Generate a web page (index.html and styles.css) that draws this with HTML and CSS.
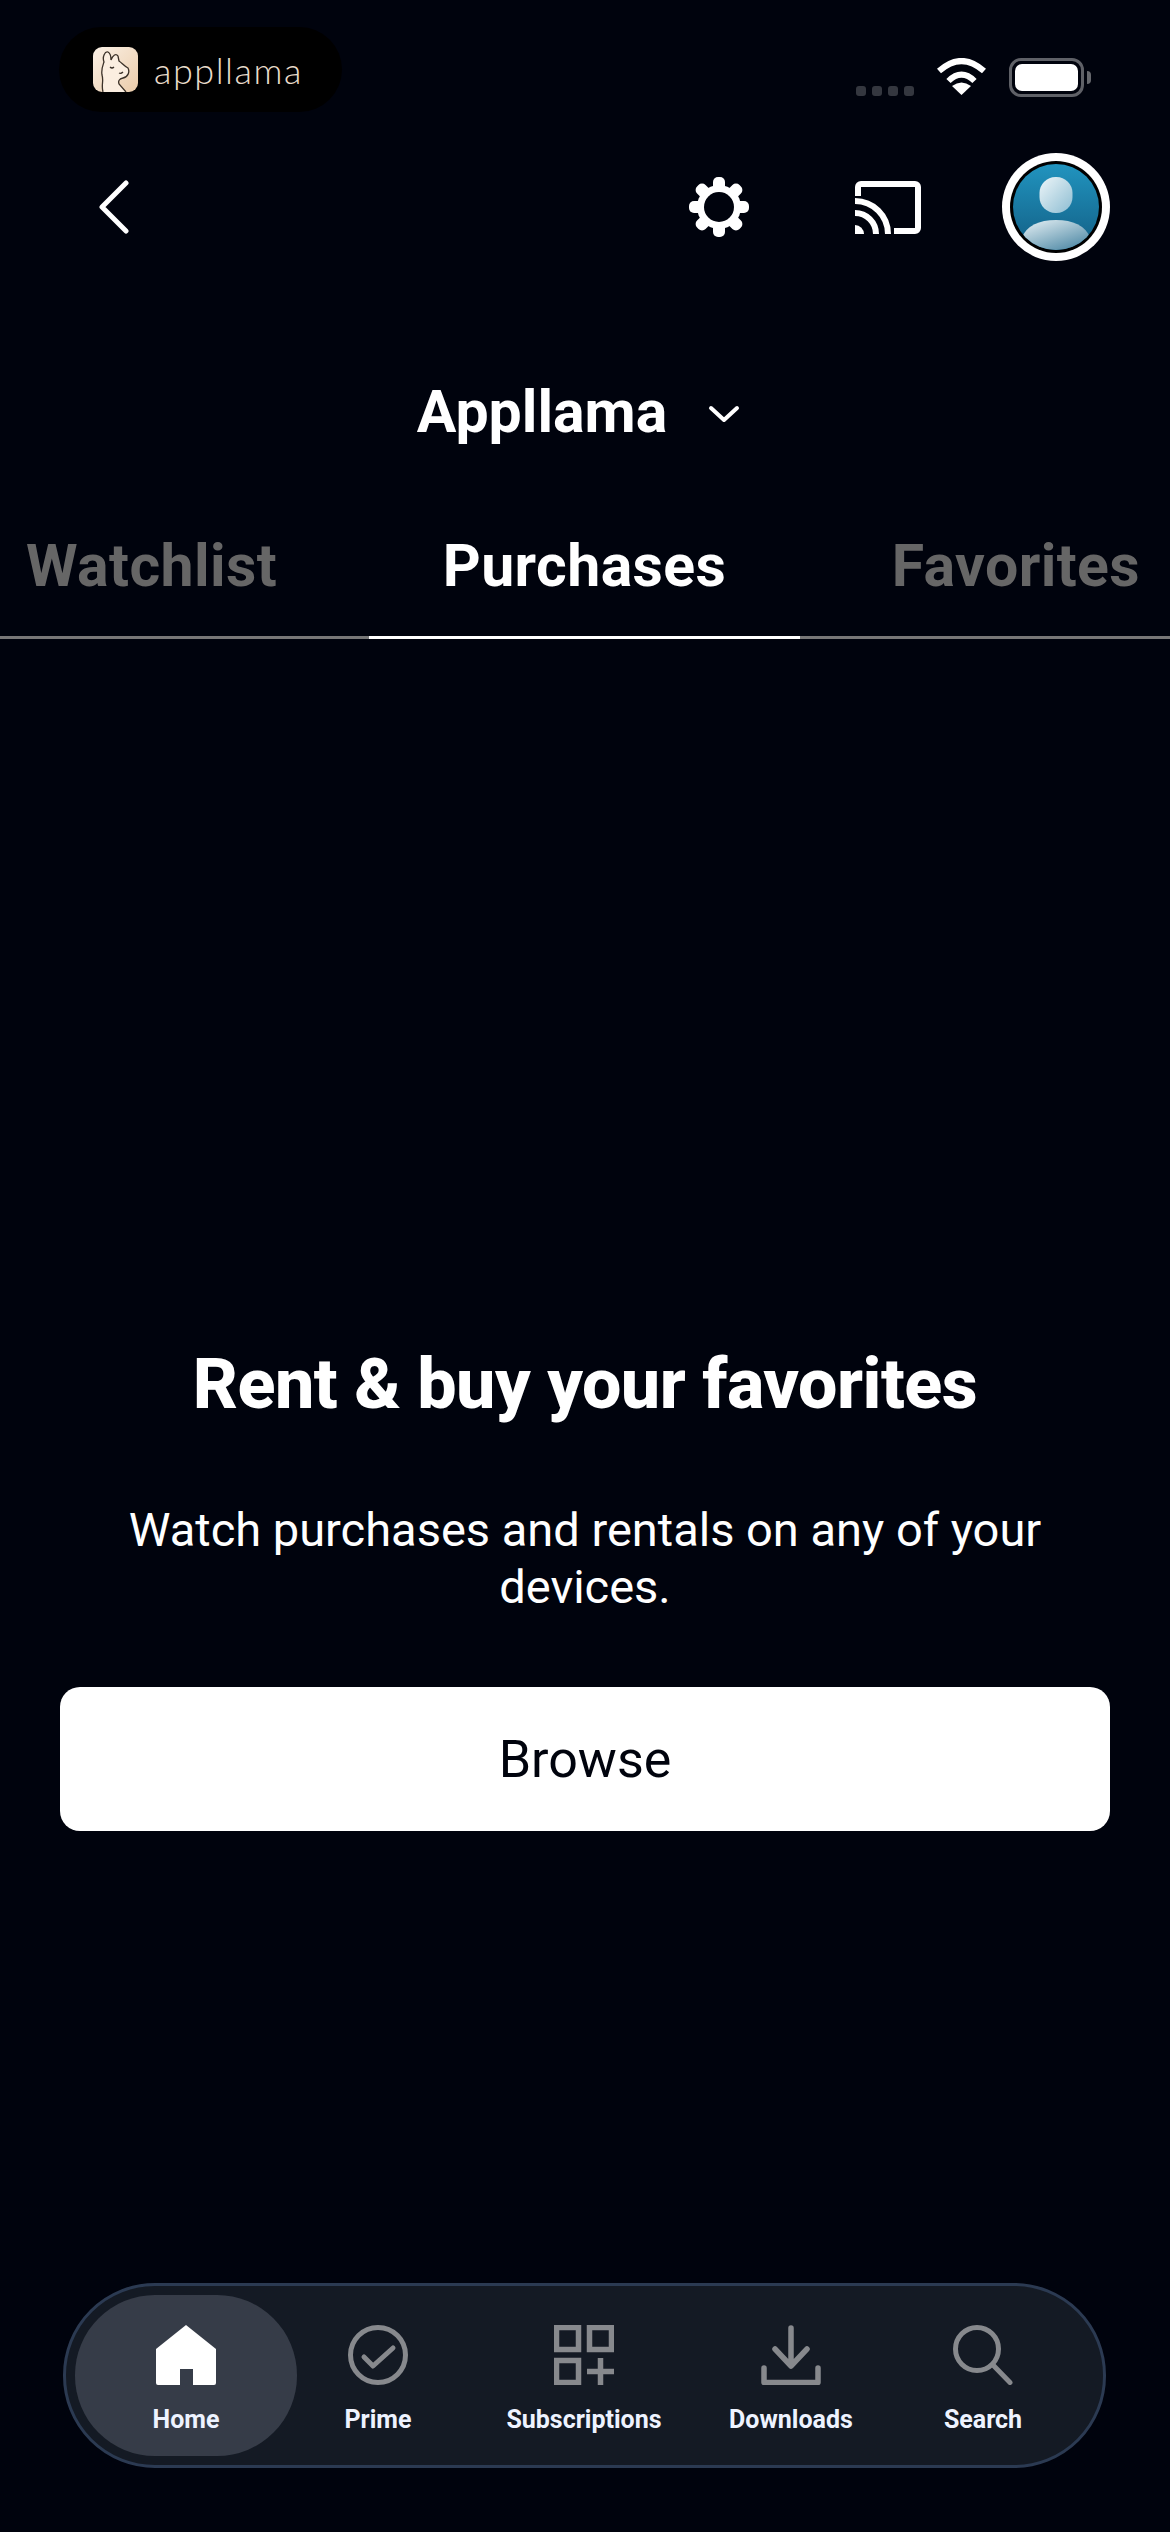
FILE: index.html
```html
<!DOCTYPE html>
<html>
<head>
    <title>Purchases</title>
    <link rel="stylesheet" href="styles.css">
</head>
<body>
    <div class="statusbar">
        <div class="brand">
            <svg class="brand-icon" viewBox="0 0 45 45">
                <defs>
                    <linearGradient id="brandBg" x1="0" y1="0" x2="1" y2="1">
                        <stop offset="0" stop-color="#fbf1e6"/>
                        <stop offset="1" stop-color="#eacba9"/>
                    </linearGradient>
                </defs>
                <rect width="45" height="45" rx="9" fill="url(#brandBg)"/>
                <path d="M10 45C8 38 11 34 9 28C8 22 10 18 11 15C9 10 12 4 15 5C17 6 18 10 18 13C20 8 23 6 25 9L26 14C29 16 31 19 35 21C37 25 35 30 30 31C26 32 25 34 26 37L33 45" fill="#fbeee0" stroke="#3b3128" stroke-width="1.300"/>
                <path d="M17 20q2 2 4 0M30 25q-2 2-4 1" fill="none" stroke="#3b3128" stroke-width="1.200"/>
            </svg>
            <span class="brand-name">appllama</span>
        </div>
        <div class="status-icons">
            <div class="signal"><i></i><i></i><i></i><i></i></div>
            <svg class="wifi" viewBox="0 0 51 37">
                <path d="M3 13Q25.500 -7 48 13M12.500 23Q25.500 10 38.500 23" fill="none" stroke="#fff" stroke-width="6"/>
                <path d="M25.500 37L16 28Q25.500 21 35 28Z" fill="#fff"/>
            </svg>
            <div class="battery"><div class="battery-level"></div></div>
            <div class="battery-tip"></div>
        </div>
    </div>

    <div class="topbar">
        <svg class="back" viewBox="0 0 30 54"><path d="M27 3L3 27L27 51" fill="none" stroke="#fff" stroke-width="5" stroke-linecap="round" stroke-linejoin="round"/></svg>
        <svg class="gear" viewBox="0 0 60 60">
            <g fill="#fff">
                <rect x="24" y="0" width="12" height="60" rx="5"/>
                <rect x="24" y="0" width="12" height="60" rx="5" transform="rotate(45 30 30)"/>
                <rect x="24" y="0" width="12" height="60" rx="5" transform="rotate(90 30 30)"/>
                <rect x="24" y="0" width="12" height="60" rx="5" transform="rotate(135 30 30)"/>
                <circle cx="30" cy="30" r="22"/>
            </g>
            <circle cx="30" cy="30" r="15" fill="#00030d"/>
        </svg>
        <svg class="cast" viewBox="0 0 66 53">
            <path d="M3 15V6a3 3 0 0 1 3-3H60a3 3 0 0 1 3 3V47a3 3 0 0 1-3 3H39" fill="none" stroke="#fff" stroke-width="6"/>
            <path d="M0 20A33 33 0 0 1 33 53M0 32A21 21 0 0 1 21 53" fill="none" stroke="#fff" stroke-width="6"/>
            <path d="M0 44A9 9 0 0 1 9 53H0Z" fill="#fff"/>
        </svg>
        <svg class="avatar" viewBox="0 0 108 108">
            <defs>
                <linearGradient id="avatarBg" x1="0" y1="0" x2="0" y2="1">
                    <stop offset="0" stop-color="#2194bf"/>
                    <stop offset="1" stop-color="#125e84"/>
                </linearGradient>
                <linearGradient id="avatarHead" x1="0" y1="0" x2="1" y2="1">
                    <stop offset="0" stop-color="#eef6f9"/>
                    <stop offset="1" stop-color="#8dbdd2"/>
                </linearGradient>
                <linearGradient id="avatarBody" x1="0.2" y1="0" x2="0.9" y2="1">
                    <stop offset="0" stop-color="#dbe9ef"/>
                    <stop offset="1" stop-color="#3d7d9c"/>
                </linearGradient>
                <clipPath id="avatarClip"><circle cx="54" cy="54" r="43"/></clipPath>
            </defs>
            <circle cx="54" cy="54" r="54" fill="#fff"/>
            <circle cx="54" cy="54" r="46" fill="#000"/>
            <circle cx="54" cy="54" r="43" fill="url(#avatarBg)"/>
            <rect x="37.500" y="24" width="33" height="36" rx="16" fill="url(#avatarHead)"/>
            <path d="M20 100V84Q28 67 54 67T88 84V100Z" fill="url(#avatarBody)" clip-path="url(#avatarClip)"/>
        </svg>
    </div>

    <div class="account">
        <span class="account-name">Appllama</span>
        <svg class="account-arrow" viewBox="0 0 32 18"><path d="M3 3L16 15L29 3" fill="none" stroke="#fff" stroke-width="4" stroke-linecap="round" stroke-linejoin="round"/></svg>
    </div>

    <div class="tabs">
        <div class="tab tab-left">Watchlist</div>
        <div class="tab tab-active">Purchases</div>
        <div class="tab tab-right">Favorites</div>
    </div>

    <div class="empty">
        <h1>Rent &amp; buy your favorites</h1>
        <p>Watch purchases and rentals on any of your devices.</p>
        <button class="browse">Browse</button>
    </div>

    <div class="nav">
        <div class="nav-item nav-active">
            <svg viewBox="0 0 60 60"><path d="M30 0L60 24V58a2 2 0 0 1-2 2H37V44H24V60H2a2 2 0 0 1-2-2V24Z" fill="#fff"/></svg>
            <span>Home</span>
        </div>
        <div class="nav-item">
            <svg viewBox="0 0 60 60"><circle cx="30" cy="30" r="27.500" fill="none" stroke="#87898d" stroke-width="5"/><path d="M16 32L25 41L45 23" fill="none" stroke="#87898d" stroke-width="5" stroke-linecap="round" stroke-linejoin="round"/></svg>
            <span>Prime</span>
        </div>
        <div class="nav-item">
            <svg viewBox="0 0 60 60">
                <g fill="none" stroke="#87898d" stroke-width="5.500">
                    <rect x="2.500" y="2.500" width="22" height="22"/>
                    <rect x="35.500" y="2.500" width="22" height="22"/>
                    <rect x="2.500" y="35.500" width="22" height="22"/>
                    <path d="M33 46.500H60M46.500 33V60"/>
                </g>
            </svg>
            <span>Subscriptions</span>
        </div>
        <div class="nav-item">
            <svg viewBox="0 0 60 60"><path d="M30 3V41M14 24L30 41L46 24M3 43V57.500H57V43" fill="none" stroke="#87898d" stroke-width="5.500" stroke-linecap="round" stroke-linejoin="round"/></svg>
            <span>Downloads</span>
        </div>
        <div class="nav-item">
            <svg viewBox="0 0 60 60"><circle cx="24" cy="24" r="21.500" fill="none" stroke="#87898d" stroke-width="5"/><path d="M40 40L57 57.500" fill="none" stroke="#87898d" stroke-width="5" stroke-linecap="round"/></svg>
            <span>Search</span>
        </div>
    </div>
</body>
</html>
```

FILE: styles.css
```css
body {
    font-family: Roboto, Arial, sans-serif;
    background-color: #00030d;
    color: #ffffff;
    margin: 0;
    padding: 0;
    height: 100vh;
    display: flex;
    flex-direction: column;
    overflow: hidden;
}
.statusbar {
    display: flex;
    justify-content: space-between;
    margin-top: 27px;
    height: 85px;
    padding: 0 79px 0 59px;
}
.brand {
    display: flex;
    align-items: center;
    width: 283px;
    padding-left: 34px;
    box-sizing: border-box;
    background-color: #000000;
    border-radius: 43px;
}
.brand-icon {
    width: 45px;
    height: 45px;
    margin-right: 16px;
}
.brand-name {
    font-family: Lato, sans-serif;
    font-weight: 300;
    font-size: 36px;
    letter-spacing: 1.500px;
    color: #e9dccb;
}
.status-icons {
    display: flex;
    align-items: flex-start;
    padding-top: 31px;
}
.signal {
    display: flex;
    gap: 6px;
    margin-top: 28px;
    margin-right: 22px;
}
.signal i {
    width: 10px;
    height: 10px;
    border-radius: 3px;
    background-color: #34373f;
}
.wifi {
    width: 51px;
    height: 37px;
    margin-right: 22px;
}
.battery {
    width: 75px;
    height: 39px;
    box-sizing: border-box;
    border: 3px solid #5f6167;
    border-radius: 12px;
    padding: 3px;
}
.battery-level {
    height: 100%;
    background-color: #ffffff;
    border-radius: 7px;
}
.battery-tip {
    width: 4px;
    height: 13px;
    margin: 13px 0 0 3px;
    background-color: #66686d;
    border-radius: 0 4px 4px 0;
}
.topbar {
    display: flex;
    align-items: center;
    margin-top: 41px;
    height: 108px;
    padding: 0 60px 0 99px;
}
.back {
    width: 30px;
    height: 54px;
    margin-right: auto;
}
.gear {
    width: 60px;
    height: 60px;
}
.cast {
    width: 66px;
    height: 53px;
    margin-left: 106px;
}
.avatar {
    width: 108px;
    height: 108px;
    margin-left: 81px;
}
.account {
    display: flex;
    align-items: center;
    justify-content: center;
    margin-top: 116px;
    height: 70px;
    padding-right: 13px;
}
.account-name {
    font-size: 59px;
    font-weight: 700;
    line-height: 70px;
}
.account-arrow {
    width: 32px;
    height: 18px;
    margin-left: 41px;
    margin-top: 4px;
}
.tabs {
    display: flex;
    margin-top: 84px;
}
.tab {
    font-size: 59px;
    font-weight: 700;
    letter-spacing: 0.400px;
    line-height: 70px;
    padding-bottom: 35px;
    border-bottom: 3px solid #777777;
    color: #666666;
}
.tab-left {
    width: 343px;
    padding-left: 26px;
}
.tab-active {
    width: 431px;
    text-align: center;
    color: #ffffff;
    border-bottom-color: #ffffff;
}
.tab-right {
    width: 340px;
    padding-right: 30px;
    text-align: right;
}
.empty {
    margin-top: 703px;
    padding: 0 60px;
    text-align: center;
}
.empty h1 {
    margin: 0;
    font-size: 70px;
    font-weight: 800;
    letter-spacing: -0.500px;
    line-height: 84px;
}
.empty p {
    margin: 75px 0 0 0;
    font-size: 47px;
    font-weight: 400;
    line-height: 57px;
}
.browse {
    display: block;
    width: 100%;
    height: 144px;
    margin-top: 72px;
    background-color: #ffffff;
    color: #00030d;
    border: 0;
    border-radius: 20px;
    font-family: Roboto, Arial, sans-serif;
    font-size: 52px;
}
.nav {
    display: grid;
    grid-template-columns: 222px 162px 250px 164px 220px;
    align-items: stretch;
    box-sizing: border-box;
    width: 1043px;
    height: 185px;
    margin: auto 0 64px 63px;
    padding: 9px;
    background-color: #141a24;
    border: 3px solid #2b3a52;
    border-radius: 92px;
}
.nav-item {
    display: flex;
    flex-direction: column;
    align-items: center;
    padding-top: 30px;
    font-size: 25px;
    font-weight: 700;
    color: #eef3ff;
}
.nav-item svg {
    width: 60px;
    height: 60px;
    margin-bottom: 20px;
}
.nav-active {
    background-color: #363c48;
    border-radius: 80px;
}
```
